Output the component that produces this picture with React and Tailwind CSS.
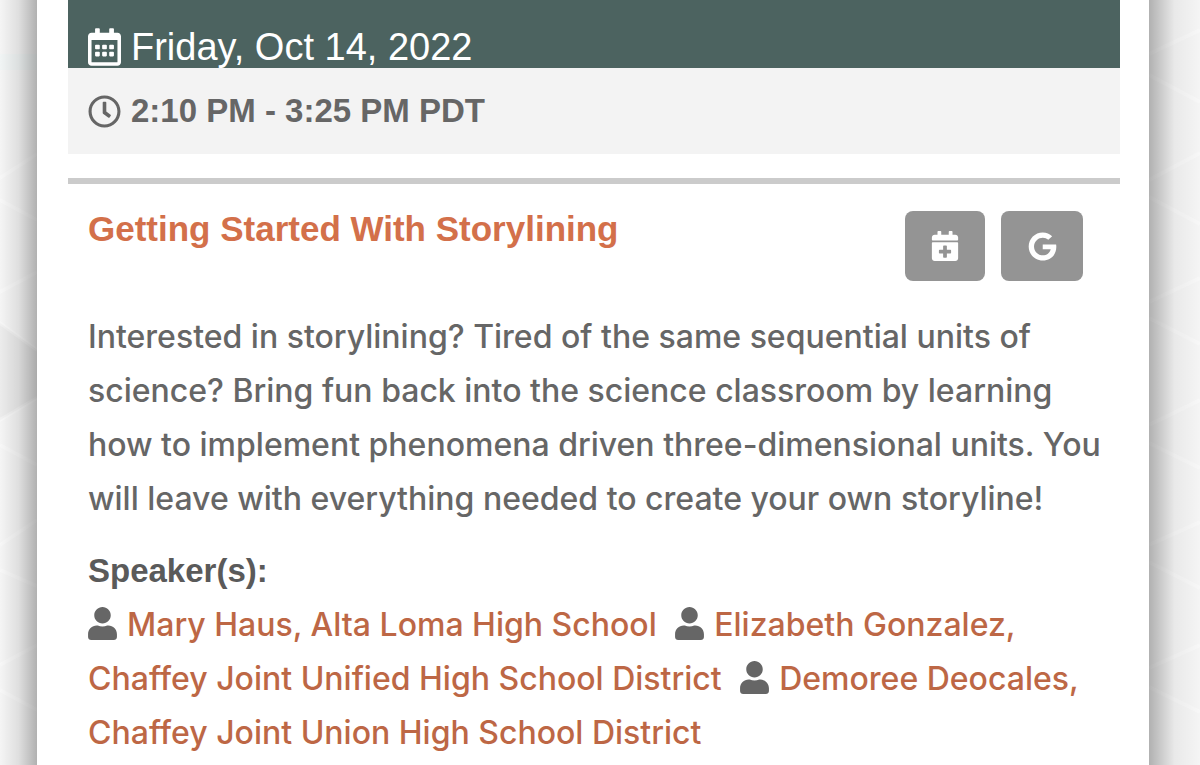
import React from "react";
import {
  FaRegCalendarAlt,
  FaRegClock,
  FaCalendarPlus,
  FaGoogle,
  FaUser,
} from "react-icons/fa";

const session = {
  date: "Friday, Oct 14, 2022",
  time: "2:10 PM - 3:25 PM PDT",
  title: "Getting Started With Storylining",
  description:
    "Interested in storylining? Tired of the same sequential units of science? Bring fun back into the science classroom by learning how to implement phenomena driven three-dimensional units. You will leave with everything needed to create your own storyline!",
  speakers: [
    "Mary Haus, Alta Loma High School",
    "Elizabeth Gonzalez, Chaffey Joint Unified High School District",
    "Demoree Deocales, Chaffey Joint Union High School District",
  ],
};

// creases of the paper texture on each side of the page
const LEFT_CREASES =
  "M0 178 L50 154 M0 200 L50 220 M0 292 L50 272 M0 323 L50 350 M0 420 L50 398 M0 445 L50 465 M0 545 L50 520 M0 570 L50 586 M0 665 L50 645 M0 690 L50 710";
const RIGHT_CREASES =
  "M0 54 L50 30 M0 75 L50 102 M0 180 L50 153 M0 197 L50 224 M0 302 L50 278 M0 318 L50 344 M0 425 L50 400 M0 443 L50 468 M0 545 L50 522 M0 562 L50 588 M0 668 L50 645 M0 687 L50 712";

const Facets = ({ creases, children }) => (
  <svg
    className="absolute inset-0 h-full w-full"
    viewBox="0 0 50 765"
    preserveAspectRatio="none"
    aria-hidden="true"
  >
    {children}
    <path
      d={creases}
      stroke="#ffffff"
      strokeOpacity="0.3"
      strokeWidth="4"
      fill="none"
    />
  </svg>
);

const App = () => {
  return (
    <div className="flex min-h-screen bg-[#f5f5f5] font-['Inter','Liberation_Sans',sans-serif]">
      <div className="relative w-[37px] shrink-0">
        <Facets creases={LEFT_CREASES}>
          <path d="M0 54 H50 V70 H0 Z" fill="#f1f5f5" />
          <path d="M0 323 L50 350 V398 L0 420 Z" fill="#ececec" />
        </Facets>
        <div className="absolute inset-0 bg-linear-to-l from-black/28 via-black/9 to-transparent" />
      </div>

      <main className="min-w-0 flex-1 bg-white pr-[29px] pl-[31px]">
        <header>
          <h2 className="flex items-center gap-[10px] bg-[#4c6360] px-5 pt-[26px] font-['Liberation_Sans',sans-serif] text-[38px] leading-[42px] text-white">
            <FaRegCalendarAlt className="h-[38px] w-[33px]" />
            {session.date}
          </h2>
          <p className="flex items-center gap-[10px] bg-[#f3f3f3] px-5 py-[22px] font-['Liberation_Sans',sans-serif] text-[33px] leading-[42px] font-bold text-[#666]">
            <FaRegClock className="size-[33px]" />
            {session.time}
          </p>
        </header>

        <article className="mt-6 border-t-[6px] border-[#cbcbcb] pt-[27px] pr-2 pl-5">
          <div className="flex items-start justify-between">
            <h3 className="font-['Liberation_Sans',sans-serif] text-[35px] leading-[36px] font-bold text-[#d3704a]">
              {session.title}
            </h3>
            <div className="mr-[29px] flex gap-4">
              <button
                type="button"
                aria-label="Add to calendar"
                className="flex h-[70px] w-20 items-center justify-center rounded-lg bg-[#949494] text-white"
              >
                <FaCalendarPlus size={30} />
              </button>
              <button
                type="button"
                aria-label="Add to Google Calendar"
                className="flex h-[70px] w-[82px] items-center justify-center rounded-lg bg-[#949494] text-white"
              >
                <FaGoogle size={29} />
              </button>
            </div>
          </div>

          <p className="mt-[29px] text-[32px] leading-[54px] font-medium text-[#666]">
            {session.description}
          </p>

          <h4 className="mt-[18px] font-['Liberation_Sans',sans-serif] text-[33px] leading-[54px] font-bold text-[#5a5a5a]">
            Speaker(s):
          </h4>
          <p className="text-[32px] leading-[54px] font-medium text-[#bd6745]">
            {session.speakers.map((speaker) => (
              <React.Fragment key={speaker}>
                <FaUser className="mr-[10px] inline-block h-[33px] w-[29px] align-[-4px] text-[#666]" />
                <a href="#speaker" className="mr-[10px]">
                  {speaker}
                </a>{" "}
              </React.Fragment>
            ))}
          </p>
        </article>
      </main>

      <div className="relative w-[51px] shrink-0">
        <Facets creases={RIGHT_CREASES} />
        <div className="absolute inset-0 bg-linear-to-r from-black/28 via-black/5 to-transparent" />
      </div>
    </div>
  );
};

export default App;
